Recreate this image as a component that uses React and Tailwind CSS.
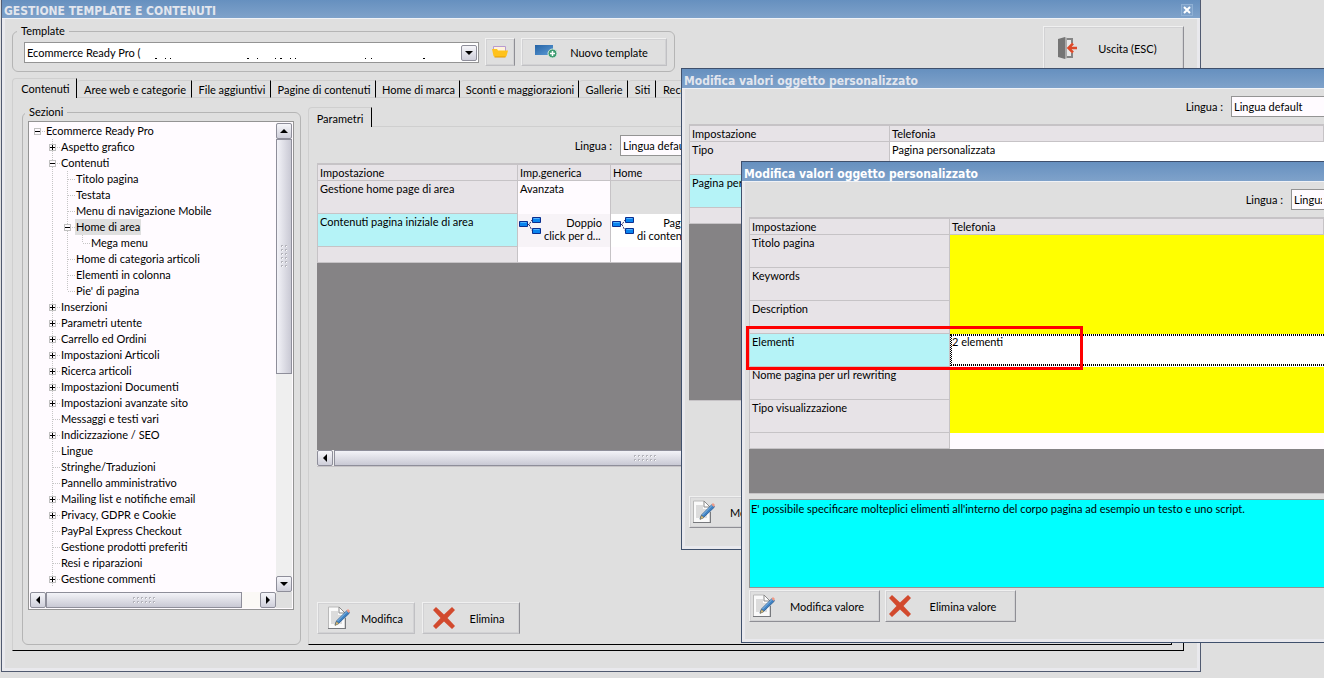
import { useState } from 'react';

const SEZIONI = [
  { livello: 0, testo: 'Ecommerce Ready Pro', nodo: 'meno' },
  { livello: 1, testo: 'Aspetto grafico', nodo: 'piu' },
  { livello: 1, testo: 'Contenuti', nodo: 'meno' },
  { livello: 2, testo: 'Titolo pagina' },
  { livello: 2, testo: 'Testata' },
  { livello: 2, testo: 'Menu di navigazione Mobile' },
  { livello: 2, testo: 'Home di area', nodo: 'meno' },
  { livello: 3, testo: 'Mega menu', ultimo: true },
  { livello: 2, testo: 'Home di categoria articoli' },
  { livello: 2, testo: 'Elementi in colonna' },
  { livello: 2, testo: "Pie' di pagina", ultimo: true },
  { livello: 1, testo: 'Inserzioni', nodo: 'piu' },
  { livello: 1, testo: 'Parametri utente', nodo: 'piu' },
  { livello: 1, testo: 'Carrello ed Ordini', nodo: 'piu' },
  { livello: 1, testo: 'Impostazioni Articoli', nodo: 'piu' },
  { livello: 1, testo: 'Ricerca articoli', nodo: 'piu' },
  { livello: 1, testo: 'Impostazioni Documenti', nodo: 'piu' },
  { livello: 1, testo: 'Impostazioni avanzate sito', nodo: 'piu' },
  { livello: 1, testo: 'Messaggi e testi vari' },
  { livello: 1, testo: 'Indicizzazione / SEO', nodo: 'piu' },
  { livello: 1, testo: 'Lingue' },
  { livello: 1, testo: 'Stringhe/Traduzioni' },
  { livello: 1, testo: 'Pannello amministrativo' },
  { livello: 1, testo: 'Mailing list e notifiche email', nodo: 'piu' },
  { livello: 1, testo: 'Privacy, GDPR e Cookie', nodo: 'piu' },
  { livello: 1, testo: 'PayPal Express Checkout' },
  { livello: 1, testo: 'Gestione prodotti preferiti' },
  { livello: 1, testo: 'Resi e riparazioni' },
  { livello: 1, testo: 'Gestione commenti', nodo: 'piu' },
];

const SCHEDE = [
  { testo: 'Contenuti', larghezza: 'w-[65px]' },
  { testo: 'Aree web e categorie', larghezza: 'w-[115px]' },
  { testo: 'File aggiuntivi', larghezza: 'w-[79px]' },
  { testo: 'Pagine di contenuti', larghezza: 'w-[105px]' },
  { testo: 'Home di marca', larghezza: 'w-[84px]' },
  { testo: 'Sconti e maggiorazioni', larghezza: 'w-[119px]' },
  { testo: 'Gallerie', larghezza: 'w-[49px]' },
  { testo: 'Siti', larghezza: 'w-[28px]' },
  { testo: 'Recensioni', larghezza: 'w-[65px]' },
];

/* ---------- Icone ---------- */

function IconaModifica() {
  return (
    <svg width="22" height="24" viewBox="0 0 22 24" className="shrink-0" aria-hidden="true">
      <path d="M0.5 1H11l6 6v15.5H0.5z" fill="#fafafa" stroke="#b9b9b9" />
      <path d="M0 22.5h18M17.5 12v11" stroke="#77797d" fill="none" />
      <path d="M3 5h7v4h4v9H3z" fill="#dcdcdc" />
      <path d="M11 1v6h6z" fill="#fff" stroke="#8b8b8b" />
      <path d="M7 19l1.5-4L19 4.500l2.500 2.500L10.500 17.500z" fill="#3f83c4" stroke="#23568e" strokeWidth="0.8" />
      <path d="M9.500 15L19.500 5" stroke="#8fc0ea" />
      <path d="M7 19.500l1.500-4 2.500 2z" fill="#e5c77c" stroke="#6b6552" strokeWidth="0.5" />
      <path d="M18.500 4.500l1.500-1.500 2 2-1.500 2z" fill="#ef9a85" />
    </svg>
  );
}

function IconaElimina() {
  return (
    <svg width="22" height="22" viewBox="0 0 22 22" className="shrink-0" aria-hidden="true">
      <path
        d="M3 0l8 7.500L19 0l3 3-7.500 8L22 19l-3 3-8-7.500L3 22l-3-3 7.500-8L0 3z"
        fill="#d24a2e"
      />
    </svg>
  );
}

function IconaCartella() {
  return (
    <svg width="16" height="14" viewBox="0 0 16 14" aria-hidden="true">
      <path d="M1.500 1.500h12v5h-12z" fill="#fff3dc" stroke="#b79ad0" />
      <path d="M0 4h5l1 1.500h10L14.500 11l-1 1H3l-1.500-1z" fill="#ffc21c" />
      <path d="M2.500 12h11" stroke="#e49a00" />
    </svg>
  );
}

function IconaNuovo() {
  return (
    <svg width="24" height="18" viewBox="0 0 24 18" aria-hidden="true">
      <defs>
        <linearGradient id="schermo" x1="0" y1="0" x2="1" y2="1">
          <stop offset="0" stopColor="#2563a5" />
          <stop offset="1" stopColor="#5c9bd6" />
        </linearGradient>
      </defs>
      <path d="M1 2h18v10H1z" fill="url(#schermo)" />
      <circle cx="18.500" cy="10.500" r="4.500" fill="#3d9b70" stroke="#d3e9dd" />
      <path d="M18.500 8v5M16 10.500h5" stroke="#fff" strokeWidth="1.500" />
    </svg>
  );
}

function IconaUscita() {
  return (
    <svg width="24" height="24" viewBox="0 0 24 24" aria-hidden="true">
      <path d="M8 3h9v18H8z" fill="#e8e8e8" />
      <path d="M9 3h7v4M16 17v4H9" stroke="#858585" strokeWidth="2" fill="none" />
      <path d="M2 3l7-2v22l-7-2z" fill="#757575" />
      <path d="M9 1l2 1v20l-2 1z" fill="#a9a9a9" />
      <path d="M21 12h-7M17 7.500L12.500 12l4.500 4.500" stroke="#dc4a2a" strokeWidth="2.500" fill="none" />
    </svg>
  );
}

function IconaGerarchia() {
  return (
    <svg width="23" height="20" viewBox="0 0 23 20" className="shrink-0" aria-hidden="true">
      <path d="M8 8.500h2L13 4M10 8.500l3 6" stroke="#33336b" strokeDasharray="2 1" fill="none" />
      <path d="M0.500 5.500h8v5h-8zM13.500 1.500h8v5h-8zM13.500 12.500h8v5h-8z" fill="#0a84ee" stroke="#0b2e8f" />
      <path d="M1.500 6.500h6M14.500 2.500h6M14.500 13.500h6" stroke="#55b4ff" />
    </svg>
  );
}

function Freccia({ verso }) {
  const forme = {
    su: 'M0 6h8L4 2z',
    giu: 'M0 2h8L4 6z',
    sinistra: 'M6 0v8L2 4z',
    destra: 'M2 0v8l4-4z',
  };
  return (
    <svg width="8" height="8" viewBox="0 0 8 8" aria-hidden="true">
      <path d={forme[verso]} fill="#000" />
    </svg>
  );
}

/* Puntini di presa delle barre di scorrimento */
function Presa({ verticale }) {
  const punti = [];
  for (let i = 0; i < 6; i++) {
    for (let j = 0; j < 2; j++) {
      punti.push(verticale ? [j * 4, i * 4] : [i * 4, j * 4]);
    }
  }
  return (
    <svg width={verticale ? 6 : 23} height={verticale ? 23 : 6} aria-hidden="true">
      {punti.map(([x, y]) => (
        <g key={`${x}-${y}`}>
          <rect x={x + 1} y={y + 1} width="1" height="1" fill="#fff" />
          <path d={`M${x} ${y}h2v1h-1v1h-1z`} fill="#b4b4bc" />
        </g>
      ))}
    </svg>
  );
}

/* ---------- Controlli ---------- */

function PulsanteFreccia({ verso, etichetta }) {
  return (
    <button
      aria-label={etichetta}
      className="flex h-4 w-4 shrink-0 items-center justify-center rounded-xs border border-[#8e8e9a] bg-linear-to-b from-[#f6f6fa] to-[#cfcfda]"
    >
      <Freccia verso={verso} />
    </button>
  );
}

function Pulsante({ icona, testo, className = '', bordo = 'border-r-[#c0c0c3] border-b-[#c0c0c3]' }) {
  return (
    <button
      className={`flex items-center border border-t-[#f0f0f0] border-l-[#f0f0f0] bg-[#dfdfdf] whitespace-nowrap shadow-[inset_0_0_0_1px_#d2d2d4] ${bordo} ${className}`}
    >
      {icona}
      <span className="flex-1 pt-0.5 text-center">{testo}</span>
    </button>
  );
}

function SceltaLingua({ id, className }) {
  return (
    <div className="flex items-center justify-end gap-2">
      <label htmlFor={id}>Lingua :</label>
      <select
        id={id}
        className={`h-[21px] appearance-none border border-[#949494] bg-[#fffbff] px-0.5 ${className}`}
      >
        <option>Lingua default</option>
      </select>
    </div>
  );
}

function BarraTitolo({ children, className }) {
  return (
    <div
      className={`flex shrink-0 items-center justify-between border-b border-[#f0f2f6] bg-linear-to-b from-[#6690bf] to-[#7fa2ca] pt-1 pl-0.5 font-['DejaVu_Sans_Condensed','DejaVu_Sans',sans-serif] text-[12px] font-bold whitespace-nowrap ${className}`}
    >
      {children}
    </div>
  );
}

function Intestazione({ children, className = '' }) {
  return (
    <th
      scope="col"
      className={`h-4 border border-[#c6c3c6] bg-[#e7e3e7] px-0.5 text-left leading-[14px] font-normal ${className}`}
    >
      {children}
    </th>
  );
}

function VoceRiga({ children, attiva }) {
  return (
    <th
      scope="row"
      className={`h-[33px] border border-[#c6c3c6] px-0.5 text-left align-top font-normal ${
        attiva ? 'bg-[#b5f3f7]' : 'bg-[#e7e3e7]'
      }`}
    >
      {children}
    </th>
  );
}

/* ---------- Albero delle sezioni ---------- */

function Ramo({ nodo, ultimo, radice }) {
  return (
    <svg width="15" height="16" viewBox="0 0 15 16" className="shrink-0" aria-hidden="true">
      {!radice && (
        <path d={ultimo ? 'M7.500 0v8' : 'M7.500 0v16'} stroke="#c6c6c6" strokeDasharray="1 1" />
      )}
      <path d="M8 8.500h7" stroke="#c6c6c6" strokeDasharray="1 1" />
      {nodo && (
        <>
          <rect x="4.500" y="5.500" width="6" height="6" fill="#fffbff" stroke="#c0c0c0" />
          <path d="M5 8.500h5" stroke="#000" />
          {nodo === 'piu' && <path d="M7.500 6v5" stroke="#000" />}
        </>
      )}
    </svg>
  );
}

function Linea() {
  return (
    <svg width="15" height="16" viewBox="0 0 15 16" className="shrink-0" aria-hidden="true">
      <path d="M7.500 0v16" stroke="#c6c6c6" strokeDasharray="1 1" />
    </svg>
  );
}

function Albero() {
  const [scelta, setScelta] = useState('Home di area');

  return (
    <ul className="min-w-0 flex-1 overflow-hidden pb-1">
      {SEZIONI.map(({ livello, testo, nodo, ultimo }) => (
        <li key={testo} className="flex h-4 items-center">
          {livello > 0 && <span className="w-[15px] shrink-0" />}
          {livello > 1 && <Linea />}
          {livello > 2 && <Linea />}
          <Ramo nodo={nodo} ultimo={ultimo} radice={livello === 0} />
          <button
            onClick={() => setScelta(testo)}
            className={`h-4 px-px whitespace-nowrap ${scelta === testo ? 'bg-[#dfdfdf]' : ''}`}
          >
            {testo}
          </button>
        </li>
      ))}
    </ul>
  );
}

function PannelloSezioni() {
  return (
    <fieldset className="flex w-[279px] shrink-0 flex-col rounded-md border border-[#b5b5b5] pr-1.5 pb-[34px] pl-[5px]">
      <legend className="-ml-[3px] px-1 leading-[14px]">Sezioni</legend>
      <div className="mt-0.5 flex flex-1 flex-col border border-[#949494] bg-[#fffbff] p-px">
        <div className="flex flex-1">
          <Albero />
          <div className="flex w-4 flex-col bg-[#efefef]">
            <PulsanteFreccia verso="su" etichetta="Scorri su" />
            <div className="flex h-[235px] items-center justify-center border border-[#8e8e9a] bg-linear-to-r from-[#f3f3f8] to-[#c9c9d4]">
              <Presa verticale />
            </div>
            <div className="flex-1" />
            <PulsanteFreccia verso="giu" etichetta="Scorri giù" />
          </div>
        </div>
        <div className="flex h-4 bg-[#dfdfdf]">
          <div className="flex flex-1 bg-[#fbf9f6]">
            <PulsanteFreccia verso="sinistra" etichetta="Scorri a sinistra" />
            <div className="flex w-[196px] items-center justify-center border border-[#8e8e9a] bg-linear-to-b from-[#f3f3f8] to-[#c9c9d4]">
              <Presa />
            </div>
            <div className="flex-1" />
            <PulsanteFreccia verso="destra" etichetta="Scorri a destra" />
          </div>
          <div className="w-4" />
        </div>
      </div>
    </fieldset>
  );
}

function CellaGerarchia({ riga1, riga2, className }) {
  return (
    <td className={`border-r border-[#c6c3c6] p-0 align-top ${className}`}>
      <div className="flex pt-0.5 pl-px leading-[13px]">
        <IconaGerarchia />
        <div className="flex-1 overflow-hidden pl-0.5 whitespace-nowrap">
          <div className="pr-2 text-right">{riga1}</div>
          <div>{riga2}</div>
        </div>
      </div>
    </td>
  );
}

function PannelloParametri() {
  return (
    <section className="mt-0.5 flex min-w-0 flex-1 flex-col">
      <div className="flex h-5">
        <button className="w-16 rounded-tl-sm border-t border-r border-l border-t-[#cfcfcf] border-r-black border-l-[#cfcfcf] pt-0.5">
          Parametri
        </button>
        <div className="flex-1 border-b border-[#cfcfcf]" />
      </div>
      <div className="flex flex-1 flex-col border-r border-b border-l border-r-black border-b-black border-l-[#cfcfcf] px-2 pt-2 pb-2.5">
        <div className="pr-[348px]">
          <SceltaLingua id="lingua-area" className="w-[195px]" />
        </div>
        <div className="mt-[7px] flex flex-1 flex-col border-t border-b border-[#c6c3c6] bg-[#858385]">
          <table className="w-full table-fixed border-collapse bg-[#fffbff]">
            <thead>
              <tr>
                <Intestazione className="w-[200px]">Impostazione</Intestazione>
                <Intestazione className="w-[93px]">Imp.generica</Intestazione>
                <Intestazione className="w-[93px]">Home</Intestazione>
                <Intestazione />
              </tr>
            </thead>
            <tbody>
              <tr>
                <VoceRiga>Gestione home page di area</VoceRiga>
                <td className="border-r border-[#c6c3c6] px-0.5 align-top">Avanzata</td>
                <td className="bg-[#dfdfdf]" />
                <td className="bg-[#dfdfdf]" />
              </tr>
              <tr>
                <VoceRiga attiva>Contenuti pagina iniziale di area</VoceRiga>
                <CellaGerarchia riga1="Doppio" riga2="click per d..." className="bg-[#f7f3f7]" />
                <CellaGerarchia riga1="Pagina" riga2="di contenuti" className="bg-white" />
                <td />
              </tr>
              <tr>
                <td className="h-4 border border-[#c6c3c6] bg-[#e7e3e7]" />
                <td className="border-r border-b border-[#c6c3c6]" />
                <td className="border-b border-[#c6c3c6]" />
                <td className="border-b border-[#c6c3c6]" />
              </tr>
            </tbody>
          </table>
          <div className="flex-1" />
          <div className="flex h-4 bg-[#efefef]">
            <PulsanteFreccia verso="sinistra" etichetta="Scorri parametri a sinistra" />
            <div className="ml-px flex w-[623px] items-center justify-center border border-[#8e8e9a] bg-linear-to-b from-[#f3f3f8] to-[#c9c9d4]">
              <Presa />
            </div>
          </div>
        </div>
        <div className="mt-[135px] flex gap-[7px]">
          <Pulsante icona={<IconaModifica />} testo="Modifica" className="h-8 w-[98px] pl-2.5" />
          <Pulsante
            icona={<IconaElimina />}
            testo="Elimina"
            bordo="border-r-[#8f8f95] border-b-[#c0c0c3]"
            className="h-8 w-[98px] pl-2.5"
          />
        </div>
      </div>
    </section>
  );
}

/* ---------- Finestre ---------- */

function FinestraPrincipale() {
  const [scheda, setScheda] = useState('Contenuti');

  return (
    <main className="mr-[123px] mb-1.5 ml-px flex flex-1 flex-col border border-t-0 border-[#505a70]">
      <BarraTitolo className="h-[19px] text-[#e2e6ee]">
        <h1>GESTIONE TEMPLATE E CONTENUTI</h1>
        <button
          aria-label="Chiudi"
          className="mr-[7px] mb-0.5 flex h-3 w-3 items-center justify-center border border-[#8fb0d4] bg-[#7b9fc8]"
        >
          <svg width="8" height="8" viewBox="0 0 8 8" aria-hidden="true">
            <path d="M1 1l6 6M7 1L1 7" stroke="#fff" strokeWidth="2" />
          </svg>
        </button>
      </BarraTitolo>
      <div className="flex flex-1 flex-col border-r-[3px] border-b-[3px] border-l-[3px] border-[#e9e9ed] px-[7px] pb-[17px]">
        <div className="flex items-start justify-between pt-[5px] pr-1.5">
          <fieldset className="flex h-12 w-[663px] items-start gap-1.5 rounded-md border border-[#b5b5b5] pl-[11px]">
            <legend className="-ml-[7px] px-1 leading-[14px]">Template</legend>
            <div className="relative mt-1 flex h-[21px] w-[455px] items-center border border-[#949494] bg-white pr-px">
              <select aria-label="Template" className="h-full min-w-0 flex-1 appearance-none pl-0.5">
                <option>Ecommerce Ready Pro (</option>
              </select>
              {/* resti del percorso oscurato */}
              <svg width="290" height="3" className="absolute bottom-0.5 left-[130px]" aria-hidden="true">
                <path
                  d="M0 1.500h2M10 1.500h1M15 1.500h1M92 1.500h2M102 1.500h1M120 1.500h1M125 1.500h2M135 1.500h1M140 1.500h1M210 1.500h1M216 1.500h1M268 1.500h2"
                  stroke="#000"
                />
              </svg>
              <PulsanteFreccia verso="giu" etichetta="Apri elenco template" />
            </div>
            <button
              aria-label="Apri cartella"
              className="flex h-7 w-[30px] items-center justify-center border border-t-[#f0f0f0] border-r-[#8f8f95] border-b-[#c0c0c3] border-l-[#f0f0f0] shadow-[inset_0_0_0_1px_#d2d2d4]"
            >
              <IconaCartella />
            </button>
            <Pulsante icona={<IconaNuovo />} testo="Nuovo template" className="h-7 w-[146px] pr-1.5 pl-3" />
          </fieldset>
          <Pulsante
            icona={<IconaUscita />}
            testo="Uscita (ESC)"
            bordo="border-r-[#8f8f95] border-b-[#8f8f95]"
            className="mt-0.5 h-[44px] w-[141px] pr-2 pl-3"
          />
        </div>

        <nav className="mt-1.5 flex h-5 items-end">
          {SCHEDE.map(({ testo, larghezza }) => (
            <button
              key={testo}
              onClick={() => setScheda(testo)}
              className={`shrink-0 rounded-tl-sm border-t border-r border-t-[#cfcfcf] border-r-black whitespace-nowrap ${larghezza} ${
                scheda === testo
                  ? 'h-5 border-l border-l-[#cfcfcf] pl-0.5'
                  : 'h-[18px] border-b border-b-[#cfcfcf] pt-px pl-0.5'
              }`}
            >
              {testo}
            </button>
          ))}
          <div className="flex-1 border-b border-[#cfcfcf]" />
        </nav>
        <div className="mr-1.5 flex flex-1 gap-[7px] border-r border-b border-l border-r-black border-b-black border-l-[#cfcfcf] pt-[7px] pr-[11px] pb-[5px] pl-[9px]">
          <PannelloSezioni />
          <PannelloParametri />
        </div>
      </div>
    </main>
  );
}

function Dialogo({ attivo, id, className, children }) {
  return (
    <section
      aria-labelledby={id}
      className={`absolute right-0 flex flex-col border border-r-0 border-[#3f506c] bg-[#dfdfdf] ${className}`}
    >
      <BarraTitolo className={attivo ? 'h-5 text-white' : 'h-5 text-[#e2e6ee]'}>
        <h2 id={id}>Modifica valori oggetto personalizzato</h2>
      </BarraTitolo>
      <div className="flex flex-1 flex-col border-b-[3px] border-l-[3px] border-[#e9e9ed] pt-[7px] pl-1">
        {children}
      </div>
    </section>
  );
}

function DialogoTelefonia() {
  return (
    <Dialogo id="titolo-telefonia" className="top-[68px] left-[681px] h-[482px]">
      <SceltaLingua id="lingua-telefonia" className="w-[93px] border-r-0" />
      <div className="mt-[7px] h-[277px] border-t border-b border-[#c6c3c6] bg-[#858385]">
        <table className="w-full table-fixed border-collapse bg-[#fffbff]">
          <thead>
            <tr>
              <Intestazione className="w-[200px]">Impostazione</Intestazione>
              <Intestazione>Telefonia</Intestazione>
            </tr>
          </thead>
          <tbody>
            <tr>
              <VoceRiga>Tipo</VoceRiga>
              <td className="bg-white px-0.5 align-top">Pagina personalizzata</td>
            </tr>
            <tr>
              <VoceRiga attiva>Pagina personalizzata</VoceRiga>
              <td className="bg-white" />
            </tr>
            <tr>
              <td className="h-4 border border-[#c6c3c6] bg-[#e7e3e7]" />
              <td />
            </tr>
          </tbody>
        </table>
      </div>
      <div className="mt-[95px]">
        <Pulsante
          icona={<IconaModifica />}
          testo="Modifica valore"
          bordo="border-r-[#8f8f95] border-b-[#8f8f95]"
          className="h-8 w-[131px] pl-[3px]"
        />
      </div>
    </Dialogo>
  );
}

function DialogoElementi() {
  const righe = [
    'Titolo pagina',
    'Keywords',
    'Description',
    'Elementi',
    'Nome pagina per url rewriting',
    'Tipo visualizzazione',
  ];

  return (
    <Dialogo attivo id="titolo-elementi" className="top-[161px] left-[741px] h-[482px]">
      <SceltaLingua id="lingua-elementi" className="w-[33px] border-r-0" />
      <div className="mt-[7px] h-[277px] border-t border-b border-[#c6c3c6] bg-[#858385]">
        <table className="w-full table-fixed border-collapse bg-[#fffbff]">
          <thead>
            <tr>
              <Intestazione className="w-[200px]">Impostazione</Intestazione>
              <Intestazione>Telefonia</Intestazione>
            </tr>
          </thead>
          <tbody>
            {righe.map((riga) => (
              <tr key={riga}>
                <VoceRiga attiva={riga === 'Elementi'}>{riga}</VoceRiga>
                {riga === 'Elementi' ? (
                  <td className="bg-white p-0 align-top">
                    <div className="border border-r-0 border-dotted border-black">
                      <div className="h-[30px] border border-r-0 border-dotted border-black leading-3">
                        2 elementi
                      </div>
                    </div>
                  </td>
                ) : (
                  <td className="bg-[#ffff00]" />
                )}
              </tr>
            ))}
            <tr>
              <td className="h-4 border border-[#c6c3c6] bg-[#e7e3e7]" />
              <td />
            </tr>
          </tbody>
        </table>
      </div>
      <p className="mt-[5px] h-[89px] border border-r-0 border-[#949494] bg-[#00ffff] px-px pt-px">
        E' possibile specificare molteplici elimenti all'interno del corpo pagina ad esempio un testo e uno
        script.
      </p>
      <div className="mt-0.5 flex gap-[5px]">
        <Pulsante
          icona={<IconaModifica />}
          testo="Modifica valore"
          bordo="border-r-[#8f8f95] border-b-[#8f8f95]"
          className="h-8 w-[131px] pl-[3px]"
        />
        <Pulsante
          icona={<IconaElimina />}
          testo="Elimina valore"
          bordo="border-r-[#8f8f95] border-b-[#8f8f95]"
          className="h-8 w-[131px] pl-[3px]"
        />
      </div>
      {/* riquadro rosso di evidenza */}
      <div className="absolute top-[164px] left-1 h-[44px] w-[337px] border-[3px] border-[#ff0000]" />
    </Dialogo>
  );
}

function App() {
  return (
    <div className="relative flex min-h-screen flex-col overflow-hidden bg-[#dfdfdf] font-[Lato,sans-serif] text-[11px] leading-4 text-black">
      <FinestraPrincipale />
      <DialogoTelefonia />
      <DialogoElementi />
    </div>
  );
}

export default App;
